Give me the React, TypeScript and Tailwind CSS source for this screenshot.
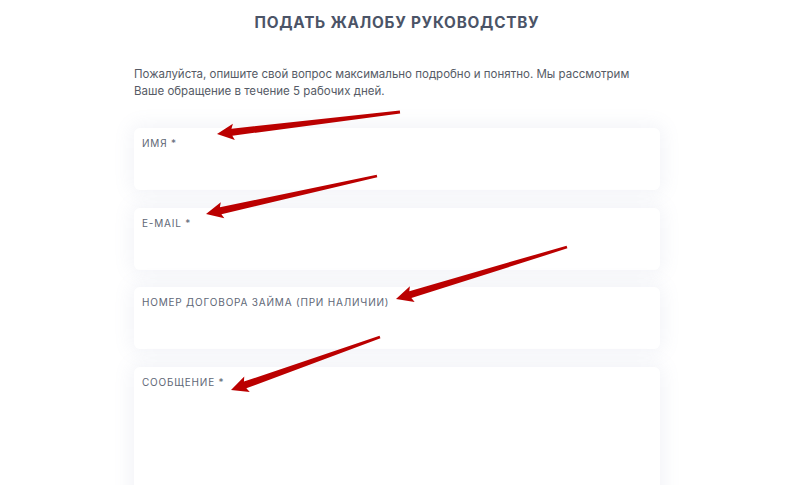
const fields = [
  { label: "Имя *", h: "h-[62px]" },
  { label: "E-mail *", h: "h-[62px]" },
  { label: "Номер договора займа (при наличии)", h: "h-[62px]" },
  { label: "Сообщение *", h: "h-[140px]" },
];

// red hand-drawn pointer arrows: [tailX, tailY, tipX, tipY]
const arrows: [number, number, number, number][] = [
  [400, 112, 217, 134],
  [377, 176, 206, 214],
  [567, 247, 396, 299],
  [380, 337, 231, 390],
];

function arrowPoints(x1: number, y1: number, x2: number, y2: number) {
  const dx = x2 - x1;
  const dy = y2 - y1;
  const len = Math.hypot(dx, dy);
  const ux = dx / len;
  const uy = dy / len;
  const px = -uy;
  const py = ux;
  const headLen = 15;
  const nx = x2 - ux * headLen;
  const ny = y2 - uy * headLen;
  const pt = (x: number, y: number, w: number) => `${x + px * w},${y + py * w}`;
  return [
    pt(x1, y1, 1.4),
    pt(nx, ny, 3.6),
    pt(nx - ux * 2, ny - uy * 2, 8.2),
    `${x2},${y2}`,
    pt(nx - ux * 2, ny - uy * 2, -8.2),
    pt(nx, ny, -3.6),
    pt(x1, y1, -1.4),
  ].join(" ");
}

export default function App() {
  return (
    <div
      className="relative h-[485px] w-[800px] overflow-hidden bg-white"
      style={{ fontFamily: "Inter, 'Noto Sans', sans-serif" }}
    >
      <div className="ml-[134px] w-[526px]">
        <h1 className="pt-[14px] text-center text-[15.3px] font-bold leading-[18px] tracking-[0.05em] text-[#4b5467]">
          ПОДАТЬ ЖАЛОБУ РУКОВОДСТВУ
        </h1>

        <p className="mt-[34px] text-[11.5px] leading-[17px] text-[#565b66]">
          Пожалуйста, опишите свой вопрос максимально подробно и понятно. Мы рассмотрим
          <br />
          Ваше обращение в течение 5 рабочих дней.
        </p>

        <div className="mt-[28px] flex flex-col gap-[17.5px]">
          {fields.map((f) => (
            <div
              key={f.label}
              className={`${f.h} rounded-md bg-white px-[8px] pt-[9px] shadow-[0_0_18px_4px_rgba(120,130,180,0.09)]`}
            >
              <div className="text-[10px] uppercase leading-[12px] tracking-[0.08em] text-[#606776]">
                {f.label}
              </div>
            </div>
          ))}
        </div>
      </div>

      <svg className="pointer-events-none absolute left-0 top-0" width="800" height="485">
        {arrows.map((a, i) => (
          <polygon key={i} points={arrowPoints(...a)} fill="#bb0000" />
        ))}
      </svg>
    </div>
  );
}
